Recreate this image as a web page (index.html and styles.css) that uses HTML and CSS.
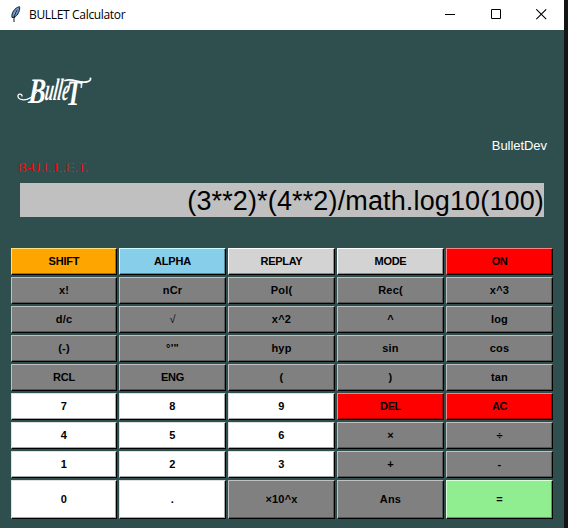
FILE: index.html
```html
<!DOCTYPE html>
<html lang="en">
<head>
<meta charset="utf-8">
<title>BULLET Calculator</title>
<link rel="stylesheet" href="styles.css">
</head>
<body>
<div class="window">
  <header class="titlebar">
    <svg class="feather" width="12" height="18" viewBox="0 0 12 18">
      <path d="M2 12.500C1 8 5 2.500 9.500 1.700C10.500 4 8 11 4 12.500Z" fill="#5b8fc9" stroke="#18202b" stroke-width="1"/>
      <path d="M4 10L8 4" stroke="#a9cdf0" stroke-width="1.4"/>
      <path d="M4 17C3.500 12.500 5 8 7.500 4.500" fill="none" stroke="#111" stroke-width="1"/>
    </svg>
    <span class="title">BULLET Calculator</span>
    <div class="controls">
      <svg width="11" height="11" viewBox="0 0 11 11"><path d="M0 5.5H10" stroke="#000"/></svg>
      <svg width="11" height="11" viewBox="0 0 11 11"><path d="M.5 .5H9.5V9.5H.5Z" fill="none" stroke="#000"/></svg>
      <svg width="11" height="11" viewBox="0 0 11 11"><path d="M.3 .3L10.2 10.2M10.2 .3L.3 10.2" stroke="#000" stroke-width="1.1"/></svg>
    </div>
  </header>
  <main class="body">
    <svg class="logo" width="110" height="60" viewBox="0 0 110 60">
      <g fill="none" stroke="#fff" stroke-linecap="round">
        <path d="M13 35C8 38 1.500 37 1 33.500C.5 30 5 31 5 33" stroke-width="1.300"/>
        <path d="M13 35Q17 33 20 29" stroke-width="1"/>
        <path d="M48 17.500C56 15 62 20.500 69 19Q74 18 73.500 15.500" stroke-width="1.800"/>
      </g>
      <g class="script">
        <text transform="translate(11 40) skewX(-4)" font-size="36" textLength="17" lengthAdjust="spacingAndGlyphs">B</text>
        <text transform="translate(27 37) skewX(-8)" font-size="31" textLength="24" lengthAdjust="spacingAndGlyphs">ulle</text>
        <text transform="translate(49 42) skewX(-2)" font-size="36" textLength="15" lengthAdjust="spacingAndGlyphs">T</text>
      </g>
    </svg>
    <div class="author">BulletDev</div>
    <div class="brand">B-U.L.L.E.T.</div>
    <div class="display">(3**2)*(4**2)/math.log10(100)</div>
    <div class="keys">
      <button class="shift caps">SHIFT</button><button class="alpha">ALPHA</button><button class="light">REPLAY</button><button class="light">MODE</button><button class="red">ON</button>
      <button>x!</button><button>nCr</button><button>Pol(</button><button>Rec(</button><button>x^3</button>
      <button>d/c</button><button class="root">√</button><button>x^2</button><button>^</button><button>log</button>
      <button>(-)</button><button>°'"</button><button>hyp</button><button>sin</button><button>cos</button>
      <button class="caps">RCL</button><button class="caps">ENG</button><button>(</button><button>)</button><button>tan</button>
      <button class="white">7</button><button class="white">8</button><button class="white">9</button><button class="red caps">DEL</button><button class="red caps">AC</button>
      <button class="white">4</button><button class="white">5</button><button class="white">6</button><button>×</button><button>÷</button>
      <button class="white">1</button><button class="white">2</button><button class="white">3</button><button>+</button><button>-</button>
      <button class="white">0</button><button class="white">.</button><button>×10^x</button><button>Ans</button><button class="green">=</button>
    </div>
  </main>
</div>
</body>
</html>
```
FILE: styles.css
```css
* { box-sizing: border-box; }
body {
  margin: 0;
  height: 528px;
  overflow: hidden;
  background: #151515;
  font-family: "Liberation Sans", Arial, sans-serif;
}
.window {
  width: 564px;
  height: 528px;
  background: #2f4f4f;
  display: flex;
  flex-direction: column;
}
.titlebar {
  height: 30px;
  flex: none;
  background: #fff;
  display: flex;
  align-items: center;
  padding: 0 17px 0 10px;
}
.feather { margin-top: -2px; }
.title {
  margin-left: 7px;
  margin-top: -1px;
  font: 12px "Open Sans", "Noto Sans", sans-serif;
  letter-spacing: -0.33px;
  color: #000;
}
.controls {
  margin-left: auto;
  display: flex;
  gap: 34.5px;
  padding-bottom: 1px;
}
.body {
  flex: 1;
  display: flex;
  flex-direction: column;
}
.logo { display: block; margin: 33px 0 0 17px; flex: none; }
.script {
  fill: #fff;
  font-family: "Liberation Serif", serif;
  font-style: italic;
  font-weight: bold;
}
.author {
  margin: 15px 17px 0 0;
  height: 16px;
  line-height: 16px;
  font-size: 13px;
  letter-spacing: -0.05px;
  text-align: right;
  color: #fff;
}
.brand {
  margin: 5px 0 0 18px;
  height: 16px;
  line-height: 17px;
  font-size: 13px;
  color: #f00;
}
.display {
  margin: 8px 20px 0;
  height: 34px;
  line-height: 36px;
  background: silver;
  color: #000;
  font-size: 27px;
  letter-spacing: 0.14px;
  text-align: right;
}
.keys {
  margin: 31px 0 0 11px;
  display: grid;
  grid-template-columns: 106px repeat(4, 107px);
  grid-template-rows: repeat(8, 27px) 39px;
  gap: 2px;
}
button {
  margin: 0;
  padding: 0 0 1px;
  border: 1px solid #000;
  border-top-color: #c0c0c0;
  border-left-color: #c0c0c0;
  border-radius: 0;
  background: #808080;
  box-shadow: inset -1px -1px #555;
  color: #000;
  font: bold 11px "Liberation Sans", Arial, sans-serif;
  letter-spacing: 0.2px;
}
.caps { letter-spacing: -0.2px; }
.shift { background: orange; border-top-color: #ffe27a; border-left-color: #ffe27a; box-shadow: inset -1px -1px #a86d00; }
.alpha { background: skyblue; border-top-color: #caffff; border-left-color: #caffff; box-shadow: inset -1px -1px #588a9b; letter-spacing: -0.2px; }
.light { background: lightgray; border-top-color: #fff; border-left-color: #fff; box-shadow: inset -1px -1px #8b8b8b; letter-spacing: -0.3px; }
.red { background: red; border-top-color: #ff8080; border-left-color: #ff8080; box-shadow: inset -1px -1px #a80000; letter-spacing: -0.4px; }
.white { background: #fff; border-top-color: #e0e0e0; border-left-color: #e0e0e0; box-shadow: inset -1px -1px #a8a8a8; }
.green { background: lightgreen; border-top-color: #d8ffd8; border-left-color: #d8ffd8; box-shadow: inset -1px -1px #5f9d5f; }
.root { font-weight: normal; }
```
